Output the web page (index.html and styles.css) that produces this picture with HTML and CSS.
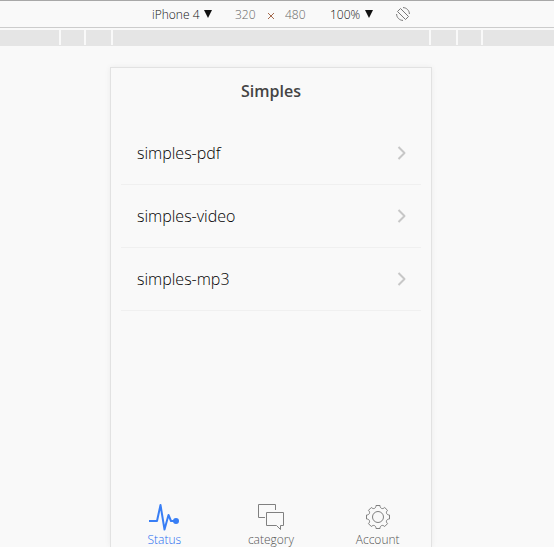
FILE: index.html
```html
<!DOCTYPE html>
<html lang="en">
<head>
<meta charset="utf-8">
<meta name="viewport" content="width=device-width, initial-scale=1">
<title>Simples</title>
<link rel="stylesheet" href="styles.css">
</head>
<body>
<header class="toolbar">
  <div class="picker">
    <select class="picker-select" aria-label="Device"><option>iPhone 4</option></select>
    <svg class="picker-arrow" viewBox="0 0 8 8" aria-hidden="true"><path d="M0 0h8L4 8z"/></svg>
  </div>
  <div class="size">
    <input class="size-input" aria-label="Width" value="320">
    <svg class="size-times" viewBox="0 0 8 8" aria-hidden="true"><path d="M1 1l6 6M7 1L1 7"/></svg>
    <input class="size-input" aria-label="Height" value="480">
  </div>
  <div class="picker">
    <select class="picker-select" aria-label="Zoom"><option>100%</option></select>
    <svg class="picker-arrow" viewBox="0 0 8 8" aria-hidden="true"><path d="M0 0h8L4 8z"/></svg>
  </div>
  <button class="rotate" type="button" aria-label="Rotate">
    <svg class="rotate-icon" viewBox="0 0 14 14" aria-hidden="true">
      <path d="M4.500 1.500L12.500 9.500 9.500 12.500 1.500 4.500zM7 .6C10.500 .6 13.400 3.500 13.400 7M.6 7c0 3.500 2.900 6.400 6.400 6.400"/>
    </svg>
  </button>
</header>
<div class="ruler">
  <div class="ruler-marks">
    <span class="mark outer"></span>
    <span class="mark inner"></span>
    <span class="mark screen"></span>
    <span class="mark inner"></span>
    <span class="mark outer"></span>
  </div>
</div>
<div class="stage">
  <main class="phone">
    <h1 class="title">Simples</h1>
    <ul class="list">
      <li class="item"><a class="item-link" href="#pdf">simples-pdf<svg class="chevron" viewBox="0 0 10 16" aria-hidden="true"><path d="M1.500 2L7.500 8l-6 6"/></svg></a></li>
      <li class="item"><a class="item-link" href="#video">simples-video<svg class="chevron" viewBox="0 0 10 16" aria-hidden="true"><path d="M1.500 2L7.500 8l-6 6"/></svg></a></li>
      <li class="item"><a class="item-link" href="#mp3">simples-mp3<svg class="chevron" viewBox="0 0 10 16" aria-hidden="true"><path d="M1.500 2L7.500 8l-6 6"/></svg></a></li>
    </ul>
    <nav class="tabs">
      <a class="tab active" href="#status">
        <svg class="tab-icon" viewBox="0 0 32 28" aria-hidden="true">
          <path class="pulse" d="M1 18h8L12.500 2l4 24.500L20.500 12l2.500 6h5"/>
          <circle class="dot" cx="28" cy="18" r="3"/>
        </svg>
        Status
      </a>
      <a class="tab" href="#category">
        <svg class="tab-icon" viewBox="0 0 32 28" aria-hidden="true">
          <path d="M10 14.500H3.500v-13h17v5.500M11.500 9.500h17v13h-3v4l-4-4h-10z"/>
        </svg>
        category
      </a>
      <a class="tab" href="#account">
        <svg class="tab-icon" viewBox="0 0 32 28" aria-hidden="true">
          <circle cx="16" cy="14" r="5.500"/>
          <path d="M14 2.500h4C18 5.500 20.500 6.600 22.700 4.500L25.500 7.300C23.400 9.500 24.500 12 27.500 12v4C24.500 16 23.400 18.500 25.500 20.700L22.700 23.500C20.500 21.400 18 22.500 18 25.500h-4C14 22.500 11.500 21.400 9.300 23.500L6.500 20.700C8.600 18.500 7.500 16 4.500 16v-4C7.500 12 8.600 9.500 6.500 7.300L9.300 4.500C11.500 6.600 14 5.500 14 2.500z"/>
        </svg>
        Account
      </a>
    </nav>
  </main>
</div>
</body>
</html>
```
FILE: styles.css
```css
* {
  box-sizing: border-box;
}

body {
  display: flex;
  flex-direction: column;
  height: 100vh;
  margin: 0;
  overflow: hidden;
  background: #f9f9f9;
  color: #222;
  font-family: "Open Sans", "Noto Sans", sans-serif;
  font-weight: 300;
}

svg {
  flex: none;
  fill: none;
  stroke: currentColor;
  stroke-linejoin: round;
}

.toolbar {
  display: flex;
  flex: none;
  align-items: center;
  justify-content: center;
  gap: 23px;
  height: 28px;
  padding-left: 8px;
  border-top: 1px solid #a8a8a8;
  border-bottom: 1px solid #ccc;
  color: #111;
}

.picker,
.size {
  display: flex;
  align-items: center;
}

.picker {
  gap: 4px;
}

.picker-select,
.size-input {
  padding: 2px 0 0;
  border: 0;
  background: none;
  color: inherit;
  font: 300 12px/16px "Open Sans", sans-serif;
  appearance: none;
}

.picker-arrow {
  width: 8px;
  height: 8px;
  fill: currentColor;
  stroke: none;
  pointer-events: none;
}

.size {
  gap: 10px;
}

.size-input {
  width: 22px;
  color: #666;
}

.size-times {
  width: 8px;
  height: 8px;
  margin-top: 4px;
  color: #a4694c;
}

.rotate {
  display: flex;
  padding: 0;
  border: 0;
  background: none;
  color: #777;
}

.rotate-icon {
  width: 14px;
  height: 14px;
}

.ruler {
  flex: none;
  height: 16px;
  margin-top: 2px;
  padding-right: 12px;
  background: #e5e5e5;
}

.ruler-marks {
  display: flex;
  justify-content: center;
  height: 15px;
}

.mark {
  border-left: 2px solid #f9f9f9;
}

.outer {
  width: 25px;
}

.outer:last-child {
  width: 27px;
  border-right: 2px solid #f9f9f9;
}

.inner {
  width: 27px;
}

.screen {
  width: 318px;
}

.stage {
  display: flex;
  flex: 1;
  justify-content: center;
  min-height: 0;
  padding: 21px 12px 0 0;
}

.phone {
  display: flex;
  flex-direction: column;
  width: 100%;
  max-width: 322px;
  border: 1px solid #e2e2e2;
  border-bottom: 0;
  box-shadow: 0 0 6px rgba(0, 0, 0, 0.06);
}

.title {
  margin: 0;
  color: #444;
  font-size: 16px;
  font-weight: 600;
  line-height: 46px;
  text-align: center;
}

.list {
  margin: 8px 10px 0;
  padding: 0;
  list-style: none;
}

.item {
  border-bottom: 1px solid #f0f0f0;
}

.item-link {
  display: flex;
  align-items: center;
  justify-content: space-between;
  height: 62px;
  padding: 0 14px 0 16px;
  color: #000;
  font-size: 16px;
  text-decoration: none;
}

.chevron {
  width: 10px;
  height: 16px;
  color: #c7c7c7;
  stroke-width: 2;
}

.tabs {
  display: grid;
  grid-template-columns: repeat(3, 1fr);
  margin-top: auto;
}

.tab {
  display: flex;
  flex-direction: column;
  align-items: center;
  gap: 2px;
  color: #555;
  font-size: 12px;
  line-height: 14px;
  text-decoration: none;
}

.tab-icon {
  width: 32px;
  height: 28px;
  color: #808080;
}

.active,
.active .tab-icon {
  color: #387ef5;
}

.active {
  color: #1f6cf0;
}

.pulse {
  stroke-width: 2;
}

.dot {
  fill: currentColor;
  stroke: none;
}
```
